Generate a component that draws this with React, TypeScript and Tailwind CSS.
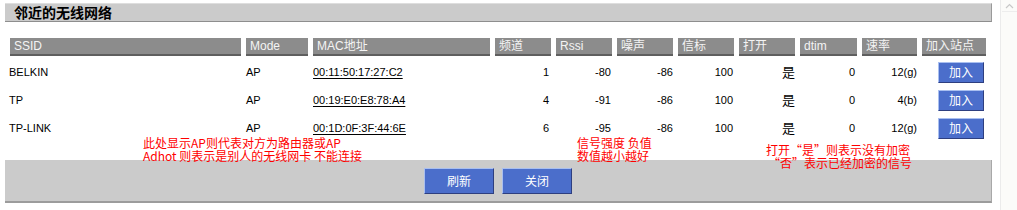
import React from "react";

const rows = [
  { ssid: "BELKIN", mode: "AP", mac: "00:11:50:17:27:C2", ch: "1", rssi: "-80", noise: "-86", beacon: "100", open: "是", dtim: "0", rate: "12(g)" },
  { ssid: "TP", mode: "AP", mac: "00:19:E0:E8:78:A4", ch: "4", rssi: "-91", noise: "-86", beacon: "100", open: "是", dtim: "0", rate: "4(b)" },
  { ssid: "TP-LINK", mode: "AP", mac: "00:1D:0F:3F:44:6E", ch: "6", rssi: "-95", noise: "-86", beacon: "100", open: "是", dtim: "0", rate: "12(g)" },
];

const headers = ["SSID", "Mode", "MAC地址", "频道", "Rssi", "噪声", "信标", "打开", "dtim", "速率", "加入站点"];

const gridCols =
  "grid grid-cols-[231px_62px_177px_56px_56px_56px_56px_56px_57px_55px_64px] gap-x-[5px]";

const font = "font-['Liberation_Sans','Noto_Sans_CJK_SC',sans-serif]";
const cjk = "font-['Noto_Sans_CJK_SC',sans-serif]";

function BlueButton({ label, className }: { label: string; className: string }) {
  return (
    <button
      className={`${className} ${cjk} flex items-center justify-center bg-[#4b6ecb] text-white text-[12px] border border-t-[#a9bff0] border-l-[#a9bff0] border-r-[#2e3f80] border-b-[#2e3f80]`}
    >
      {label}
    </button>
  );
}

export default function App() {
  return (
    <div className={`relative flex w-[1017px] h-[210px] overflow-hidden bg-white text-black ${font}`}>
      <div className="relative w-[1000px] pl-[5px] flex flex-col">
        {/* Title bar */}
        <div className={`mt-[3px] h-[19px] w-[987px] flex items-center pl-[9px] bg-[#cbcbcb] border-t border-t-[#dedede] border-b border-b-[#8e8e8e] border-r border-r-[#9a9a9a] text-[14px] font-bold ${cjk}`}>
          邻近的无线网络
        </div>

        {/* Header */}
        <div className={`${gridCols} ml-[5px] mt-[16px]`}>
          {headers.map((h) => (
            <div
              key={h}
              className="h-[18px] pl-[4px] flex items-center bg-[#8c8c8c] border-b-2 border-[#5f5f5f] text-[#f4f4f4] text-[12px] whitespace-nowrap"
            >
              {h}
            </div>
          ))}
        </div>

        {/* Body */}
        <div className={`${gridCols} ml-[5px] mt-[2px] text-[11px]`}>
          {rows.map((r) => (
            <React.Fragment key={r.ssid}>
              <div className="h-[28px] flex items-center -ml-[1px]">{r.ssid}</div>
              <div className="h-[28px] flex items-center">{r.mode}</div>
              <div className="h-[28px] flex items-center">
                <span className="underline underline-offset-2">{r.mac}</span>
              </div>
              <div className="h-[28px] flex items-center justify-end pr-[2px]">{r.ch}</div>
              <div className="h-[28px] flex items-center justify-end pr-[1px]">{r.rssi}</div>
              <div className="h-[28px] flex items-center justify-end">{r.noise}</div>
              <div className="h-[28px] flex items-center justify-end pr-[1px]">{r.beacon}</div>
              <div className={`h-[28px] flex items-center justify-end text-[13px] ${cjk}`}>{r.open}</div>
              <div className="h-[28px] flex items-center justify-end pr-[2px]">{r.dtim}</div>
              <div className="h-[28px] flex items-center justify-end">{r.rate}</div>
              <div className="h-[28px] flex items-center justify-end pr-[2px]">
                <BlueButton label="加入" className="w-[46px] h-[21px]" />
              </div>
            </React.Fragment>
          ))}
        </div>

        {/* Bottom bar */}
        <div className="mt-[18px] w-[987px] h-[43px] flex items-center justify-center gap-[8px] bg-[#cbcbcb] border-b-2 border-b-[#9c9c9c] border-r border-r-[#a8a8a8]">
          <BlueButton label="刷新" className="w-[70px] h-[26px]" />
          <BlueButton label="关闭" className="w-[70px] h-[26px]" />
        </div>

        {/* Annotations */}
        <div className={`absolute left-[143px] top-[136px] text-[12px] leading-[13px] text-[#ff0000] whitespace-nowrap ${cjk}`}>
          <div>此处显示AP则代表对方为路由器或AP</div>
          <div>Adhot 则表示是别人的无线网卡 不能连接</div>
        </div>
        <div className={`absolute left-[577px] top-[136px] text-[12px] leading-[13px] text-[#ff0000] whitespace-nowrap ${cjk}`}>
          <div>信号强度 负值</div>
          <div>数值越小越好</div>
        </div>
        <div className={`absolute left-[766px] top-[143px] text-[12px] leading-[13px] text-[#ff0000] whitespace-nowrap ${cjk}`}>
          <div>打开“是”则表示没有加密</div>
          <div className="pl-[2px]">“否”表示已经加密的信号</div>
        </div>
      </div>

      {/* Scrollbar */}
      <div className="w-[17px] h-[210px] bg-[#fbfbf9] border-l border-[#ebebeb] flex flex-col items-center">
        <div className="w-[15px] h-[12px] flex items-center justify-center border-b border-[#ededed]">
          <svg width="9" height="6" viewBox="0 0 9 6">
            <path d="M1 5 L4.5 1.5 L8 5" fill="none" stroke="#c8c8c8" strokeWidth="1.2" />
          </svg>
        </div>
      </div>
    </div>
  );
}
